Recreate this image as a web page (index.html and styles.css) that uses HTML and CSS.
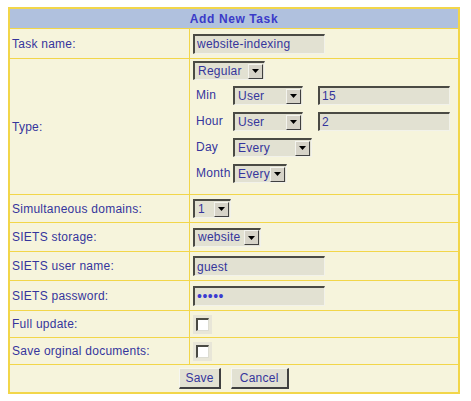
FILE: index.html
```html
<!DOCTYPE html>
<html>
<head>
<meta charset="utf-8">
<link rel="stylesheet" href="styles.css">
</head>
<body>
<table class="form">
  <tr class="hdr"><th colspan="2">Add New Task</th></tr>
  <tr class="h29"><td class="lbl">Task name:</td><td class="val"><input class="txt" type="text" value="website-indexing"></td></tr>
  <tr class="htype">
    <td class="lbl">Type:</td>
    <td class="val type">
      <div class="stack">
        <span class="sel w72"><span class="st">Regular</span><span class="arr"><svg width="7" height="4" viewBox="0 0 7 4"><path d="M0 0H7L3.5 4Z" fill="#000"/></svg></span></span>
        <div class="sched">
          <span class="sl">Min</span>
          <span class="sel w70"><span class="st">User</span><span class="arr"><svg width="7" height="4" viewBox="0 0 7 4"><path d="M0 0H7L3.5 4Z" fill="#000"/></svg></span></span>
          <input class="txt ml" type="text" value="15">
          <span class="sl">Hour</span>
          <span class="sel w70"><span class="st">User</span><span class="arr"><svg width="7" height="4" viewBox="0 0 7 4"><path d="M0 0H7L3.5 4Z" fill="#000"/></svg></span></span>
          <input class="txt ml" type="text" value="2">
          <span class="sl">Day</span>
          <span class="sel w79 span2"><span class="st">Every</span><span class="arr"><svg width="7" height="4" viewBox="0 0 7 4"><path d="M0 0H7L3.5 4Z" fill="#000"/></svg></span></span>
          <span class="sl">Month</span>
          <span class="sel w54 span2"><span class="st">Every</span><span class="arr"><svg width="7" height="4" viewBox="0 0 7 4"><path d="M0 0H7L3.5 4Z" fill="#000"/></svg></span></span>
        </div>
      </div>
    </td>
  </tr>
  <tr class="h27"><td class="lbl">Simultaneous domains:</td><td class="val"><span class="sel w38"><span class="st">1</span><span class="arr"><svg width="7" height="4" viewBox="0 0 7 4"><path d="M0 0H7L3.5 4Z" fill="#000"/></svg></span></span></td></tr>
  <tr class="h28"><td class="lbl">SIETS storage:</td><td class="val"><span class="sel w68"><span class="st">website</span><span class="arr"><svg width="7" height="4" viewBox="0 0 7 4"><path d="M0 0H7L3.5 4Z" fill="#000"/></svg></span></span></td></tr>
  <tr class="h28"><td class="lbl">SIETS user name:</td><td class="val"><input class="txt" type="text" value="guest"></td></tr>
  <tr class="h29"><td class="lbl">SIETS password:</td><td class="val"><input class="txt pw" type="password" value="guest"></td></tr>
  <tr class="h26"><td class="lbl">Full update:</td><td class="val"><span class="cbw"><span class="cb"></span></span></td></tr>
  <tr class="h26"><td class="lbl">Save orginal documents:</td><td class="val"><span class="cbw"><span class="cb"></span></span></td></tr>
  <tr class="h27"><td colspan="2" class="btns"><button class="btn">Save</button><button class="btn wide">Cancel</button></td></tr>
</table>
</body>
</html>
```
FILE: styles.css
```css
html, body {
  margin: 0;
  padding: 0;
  background: #ffffff;
}
body {
  padding: 7px 0 0 8px;
  font-family: "Liberation Sans", Arial, sans-serif;
  font-size: 12px;
  letter-spacing: 0.25px;
  color: #35359c;
}
.form {
  border-collapse: collapse;
  width: 452px;
  border: 2px solid #f2d64a;
}
.form td, .form th {
  border: 1px solid #f2d64a;
  padding: 0;
  vertical-align: middle;
}
.hdr th {
  background: #b0c1de;
  color: #3a3ac8;
  font-weight: bold;
  letter-spacing: 0.6px;
  height: 19px;
  text-align: center;
}
.lbl {
  width: 177px;
  padding-left: 2px !important;
  background: #f6f4dc;
  text-align: left;
}
.val {
  background: #f6f4dc;
  padding-left: 3px !important;
}
.h26 td { height: 26px; }
.h27 td { height: 27px; }
.h28 td { height: 28px; }
.h29 td { height: 29px; }
.htype td { height: 133px; }
.val.type {
  vertical-align: top;
  padding-top: 2px !important;
}
.stack {
  display: flex;
  flex-direction: column;
  align-items: flex-start;
  gap: 6px;
}
.sched {
  display: grid;
  grid-template-columns: 37px auto auto;
  row-gap: 7px;
  align-items: center;
  padding-left: 3px;
}
.sl {
  line-height: 19px;
}
.span2 { grid-column: 2 / span 2; }
.txt {
  box-sizing: border-box;
  width: 132px;
  height: 20px;
  margin: 0;
  padding: 0 2px;
  border-style: solid;
  border-width: 2px 1px 1px 2px;
  border-color: #4a4a44 #f2f2ea #f2f2ea #4a4a44;
  background: #e2e1d2;
  font-family: "Liberation Sans", Arial, sans-serif;
  font-size: 12px;
  letter-spacing: 0.25px;
  color: #35359c;
  outline: none;
}
.txt.ml { margin-left: 15px; height: 19px; }
.txt.pw {
  color: #3a3ad0;
  letter-spacing: 0.5px;
  font-size: 14px;
}
.sel {
  box-sizing: border-box;
  display: inline-flex;
  align-items: center;
  justify-content: space-between;
  height: 19px;
  border-style: solid;
  border-width: 2px 1px 1px 2px;
  border-color: #4a4a44 #f2f2ea #f2f2ea #4a4a44;
  background: #e2e1d2;
  padding-right: 1px;
}
.st {
  padding-left: 3px;
  line-height: 15px;
}
.arr {
  box-sizing: border-box;
  width: 15px;
  height: 15px;
  display: inline-flex;
  align-items: center;
  justify-content: center;
  background: #d6d3c8;
  border-style: solid;
  border-width: 1px;
  border-color: #f4f4ee #404040 #404040 #f4f4ee;
}
.w72 { width: 72px; }
.w70 { width: 70px; }
.w79 { width: 79px; }
.w54 { width: 54px; }
.w38 { width: 38px; }
.w68 { width: 68px; }
.cbw {
  display: inline-flex;
  align-items: center;
  justify-content: center;
  width: 19px;
  height: 19px;
  background: #e8e6d8;
  vertical-align: middle;
}
.cb {
  box-sizing: border-box;
  width: 13px;
  height: 13px;
  background: #ffffff;
  border-style: solid;
  border-width: 2px 1px 1px 2px;
  border-color: #4a4a44 #dcdcd2 #dcdcd2 #4a4a44;
}
.btns {
  background: #f6f4dc;
  text-align: center;
}
.btn {
  box-sizing: border-box;
  height: 21px;
  margin: 0 5px;
  padding: 0 5px;
  background: #e2e1d2;
  border-style: solid;
  border-width: 1px 2px 2px 1px;
  border-color: #f6f6f0 #404040 #404040 #f6f6f0;
  font-family: "Liberation Sans", Arial, sans-serif;
  font-size: 12px;
  letter-spacing: 0.25px;
  color: #35359c;
}
.btn.wide { padding: 0 8px; }
```
